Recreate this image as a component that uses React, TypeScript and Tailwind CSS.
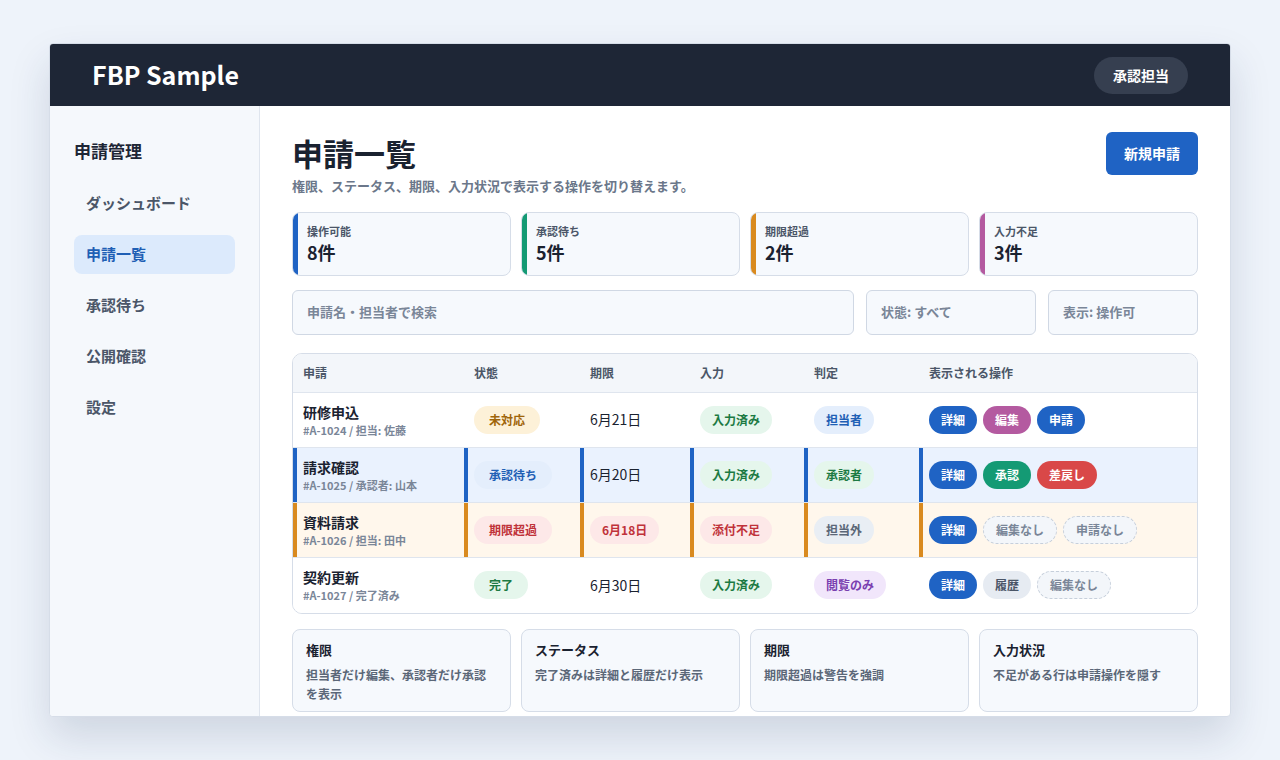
import React from 'react';

const FONT = { fontFamily: '"Noto Sans CJK JP", "Noto Sans", sans-serif' };

const stats = [
  { label: '操作可能', value: '8件', bar: 'bg-[#1f63c4]' },
  { label: '承認待ち', value: '5件', bar: 'bg-[#149a74]' },
  { label: '期限超過', value: '2件', bar: 'bg-[#d98a1f]' },
  { label: '入力不足', value: '3件', bar: 'bg-[#b45aa0]' },
];

const pill = 'inline-flex items-center h-[28px] px-3 rounded-full text-[12px] font-bold';

type Row = {
  name: string;
  sub: string;
  status: [string, string];
  date: string;
  dateCls?: string;
  input: [string, string];
  role: [string, string];
  actions: [string, string][];
  bg: string;
  border: string;
};

const rows: Row[] = [
  {
    name: '研修申込', sub: '#A-1024 / 担当: 佐藤',
    status: ['未対応', 'bg-[#fdf1d8] text-[#a0650a]'], date: '6月21日',
    input: ['入力済み', 'bg-[#e5f6ec] text-[#1c7a43]'], role: ['担当者', 'bg-[#e4eefc] text-[#1f5fb5]'],
    actions: [['詳細', 'bg-[#1f63c4] text-white'], ['編集', 'bg-[#b45aa0] text-white'], ['申請', 'bg-[#1f63c4] text-white']],
    bg: 'bg-white', border: 'border-l-4 border-transparent',
  },
  {
    name: '請求確認', sub: '#A-1025 / 承認者: 山本',
    status: ['承認待ち', 'bg-[#e4eefc] text-[#1f5fb5]'], date: '6月20日',
    input: ['入力済み', 'bg-[#e5f6ec] text-[#1c7a43]'], role: ['承認者', 'bg-[#e5f6ec] text-[#1c7a43]'],
    actions: [['詳細', 'bg-[#1f63c4] text-white'], ['承認', 'bg-[#149a74] text-white'], ['差戻し', 'bg-[#d94848] text-white']],
    bg: 'bg-[#eaf2fe]', border: 'border-l-4 border-[#1f63c4]',
  },
  {
    name: '資料請求', sub: '#A-1026 / 担当: 田中',
    status: ['期限超過', 'bg-[#fde8e8] text-[#c0323a]'], date: '6月18日', dateCls: 'bg-[#fde8e8] text-[#c0323a]',
    input: ['添付不足', 'bg-[#fde8e8] text-[#c0323a]'], role: ['担当外', 'bg-[#e9eef4] text-[#5b6778]'],
    actions: [['詳細', 'bg-[#1f63c4] text-white'], ['編集なし', 'dash'], ['申請なし', 'dash']],
    bg: 'bg-[#fff7ec]', border: 'border-l-4 border-[#d98a1f]',
  },
  {
    name: '契約更新', sub: '#A-1027 / 完了済み',
    status: ['完了', 'bg-[#e5f6ec] text-[#1c7a43]'], date: '6月30日',
    input: ['入力済み', 'bg-[#e5f6ec] text-[#1c7a43]'], role: ['閲覧のみ', 'bg-[#f1e6fb] text-[#7a3fb0]'],
    actions: [['詳細', 'bg-[#1f63c4] text-white'], ['履歴', 'bg-[#e6ebf2] text-[#4a5567]'], ['編集なし', 'dash']],
    bg: 'bg-white', border: 'border-l-4 border-transparent',
  },
];

const notes = [
  { t: '権限', d: '担当者だけ編集、承認者だけ承認を表示' },
  { t: 'ステータス', d: '完了済みは詳細と履歴だけ表示' },
  { t: '期限', d: '期限超過は警告を強調' },
  { t: '入力状況', d: '不足がある行は申請操作を隠す' },
];

const cols = 'grid grid-cols-[171px_116px_110px_114px_115px_1fr]';

export default function App() {
  return (
    <div style={FONT} className="min-h-[760px] bg-[#eef3fa] pt-[43px] px-[49px]">
      <div className="w-[1182px] h-[674px] bg-white rounded-[4px] overflow-hidden shadow-[0_20px_40px_rgba(30,50,90,0.15)] border border-[#d6dde8] flex flex-col">
        <header className="h-[62px] bg-[#1e2636] flex items-center justify-between pl-[42px] pr-[42px] shrink-0">
          <div className="text-white text-[25px] font-bold">FBP Sample</div>
          <div className="h-[37px] px-[19px] rounded-full bg-[#363f50] text-white text-[14px] font-bold flex items-center">承認担当</div>
        </header>
        <div className="flex flex-1 min-h-0">
          <aside className="w-[210px] bg-[#f5f8fc] border-r border-[#dfe5ee] px-[24px] pt-[32px] shrink-0">
            <div className="text-[17px] font-bold text-[#1e2636] mb-[20px]">申請管理</div>
            <nav className="flex flex-col gap-[12px]">
              {['ダッシュボード', '申請一覧', '承認待ち', '公開確認', '設定'].map((n) => (
                <div key={n} className={`h-[39px] rounded-[8px] px-[12px] flex items-center text-[15px] font-bold ${n === '申請一覧' ? 'bg-[#dceafc] text-[#1f5fb5]' : 'text-[#4b5668]'}`}>{n}</div>
              ))}
            </nav>
          </aside>
          <main className="flex-1 px-[32px] pt-[26px]">
            <div className="flex justify-between items-start">
              <div>
                <h1 className="text-[31px] font-bold text-[#1a2230] leading-[42px]">申請一覧</h1>
                <p className="text-[13px] font-bold text-[#6b778a] mt-[2px]">権限、ステータス、期限、入力状況で表示する操作を切り替えます。</p>
              </div>
              <button className="h-[43px] px-[18px] rounded-[6px] bg-[#1f63c4] text-white text-[14px] font-bold">新規申請</button>
            </div>
            <div className="grid grid-cols-4 gap-[10px] mt-[16px]">
              {stats.map((s) => (
                <div key={s.label} className="h-[64px] rounded-[8px] border border-[#d6dde8] bg-[#f6f9fd] flex overflow-hidden">
                  <div className={`w-[5px] ${s.bar}`} />
                  <div className="pl-[9px] pt-[10px]">
                    <div className="text-[11px] font-bold text-[#4b5668]">{s.label}</div>
                    <div className="text-[18px] font-bold text-[#1a2230] leading-[26px]">{s.value}</div>
                  </div>
                </div>
              ))}
            </div>
            <div className="flex gap-[12px] mt-[14px]">
              <div className="flex-1 h-[45px] rounded-[6px] border border-[#d0d8e4] bg-[#f6f9fd] px-[14px] flex items-center text-[13px] font-bold text-[#7a8698]">申請名・担当者で検索</div>
              <div className="w-[170px] h-[45px] rounded-[6px] border border-[#d0d8e4] bg-[#f6f9fd] px-[14px] flex items-center text-[13px] font-bold text-[#7a8698]">状態: すべて</div>
              <div className="w-[150px] h-[45px] rounded-[6px] border border-[#d0d8e4] bg-[#f6f9fd] px-[14px] flex items-center text-[13px] font-bold text-[#7a8698]">表示: 操作可</div>
            </div>
            <div className="mt-[18px] rounded-[10px] border border-[#d6dde8] overflow-hidden">
              <div className={`${cols} h-[39px] bg-[#f3f6fa] border-b border-[#dfe5ee] text-[12px] font-bold text-[#4b5668] items-center`}>
                {['申請', '状態', '期限', '入力', '判定', '表示される操作'].map((h) => (
                  <div key={h} className="pl-[10px]">{h}</div>
                ))}
              </div>
              {rows.map((r, i) => (
                <div key={r.name} className={`${cols} h-[55px] ${r.bg} ${i < 3 ? 'border-b border-[#dfe5ee]' : ''}`}>
                  <div className={`${r.border} pl-[6px] flex flex-col justify-center`}>
                    <div className="text-[14px] font-bold text-[#1a2230] leading-[20px]">{r.name}</div>
                    <div className="text-[11px] font-bold text-[#7a8698] leading-[16px]">{r.sub}</div>
                  </div>
                  <div className={`${r.border} pl-[6px] flex items-center`}>
                    <span className={`${pill} px-[15px] ${r.status[1]}`}>{r.status[0]}</span>
                  </div>
                  <div className={`${r.border} pl-[6px] flex items-center`}>
                    {r.dateCls ? (
                      <span className={`${pill} px-[12px] ${r.dateCls}`}>{r.date}</span>
                    ) : (
                      <span className="text-[14px] text-[#1a2230]">{r.date}</span>
                    )}
                  </div>
                  <div className={`${r.border} pl-[6px] flex items-center`}>
                    <span className={`${pill} ${r.input[1]}`}>{r.input[0]}</span>
                  </div>
                  <div className={`${r.border} pl-[6px] flex items-center`}>
                    <span className={`${pill} ${r.role[1]}`}>{r.role[0]}</span>
                  </div>
                  <div className={`${r.border} pl-[6px] flex items-center gap-[6px]`}>
                    {r.actions.map(([a, c]) => (
                      <span key={a} className={`${pill} ${c === 'dash' ? 'border border-dashed border-[#c6cfdb] bg-[#f3f6fa] text-[#7a8698]' : c}`}>{a}</span>
                    ))}
                  </div>
                </div>
              ))}
            </div>
            <div className="grid grid-cols-4 gap-[10px] mt-[15px]">
              {notes.map((n) => (
                <div key={n.t} className="h-[83px] rounded-[8px] border border-[#d6dde8] bg-[#f6f9fd] px-[13px] pt-[10px]">
                  <div className="text-[13px] font-bold text-[#1a2230]">{n.t}</div>
                  <div className="text-[12px] font-bold text-[#5b6778] mt-[6px] leading-[19px]">{n.d}</div>
                </div>
              ))}
            </div>
          </main>
        </div>
      </div>
    </div>
  );
}
